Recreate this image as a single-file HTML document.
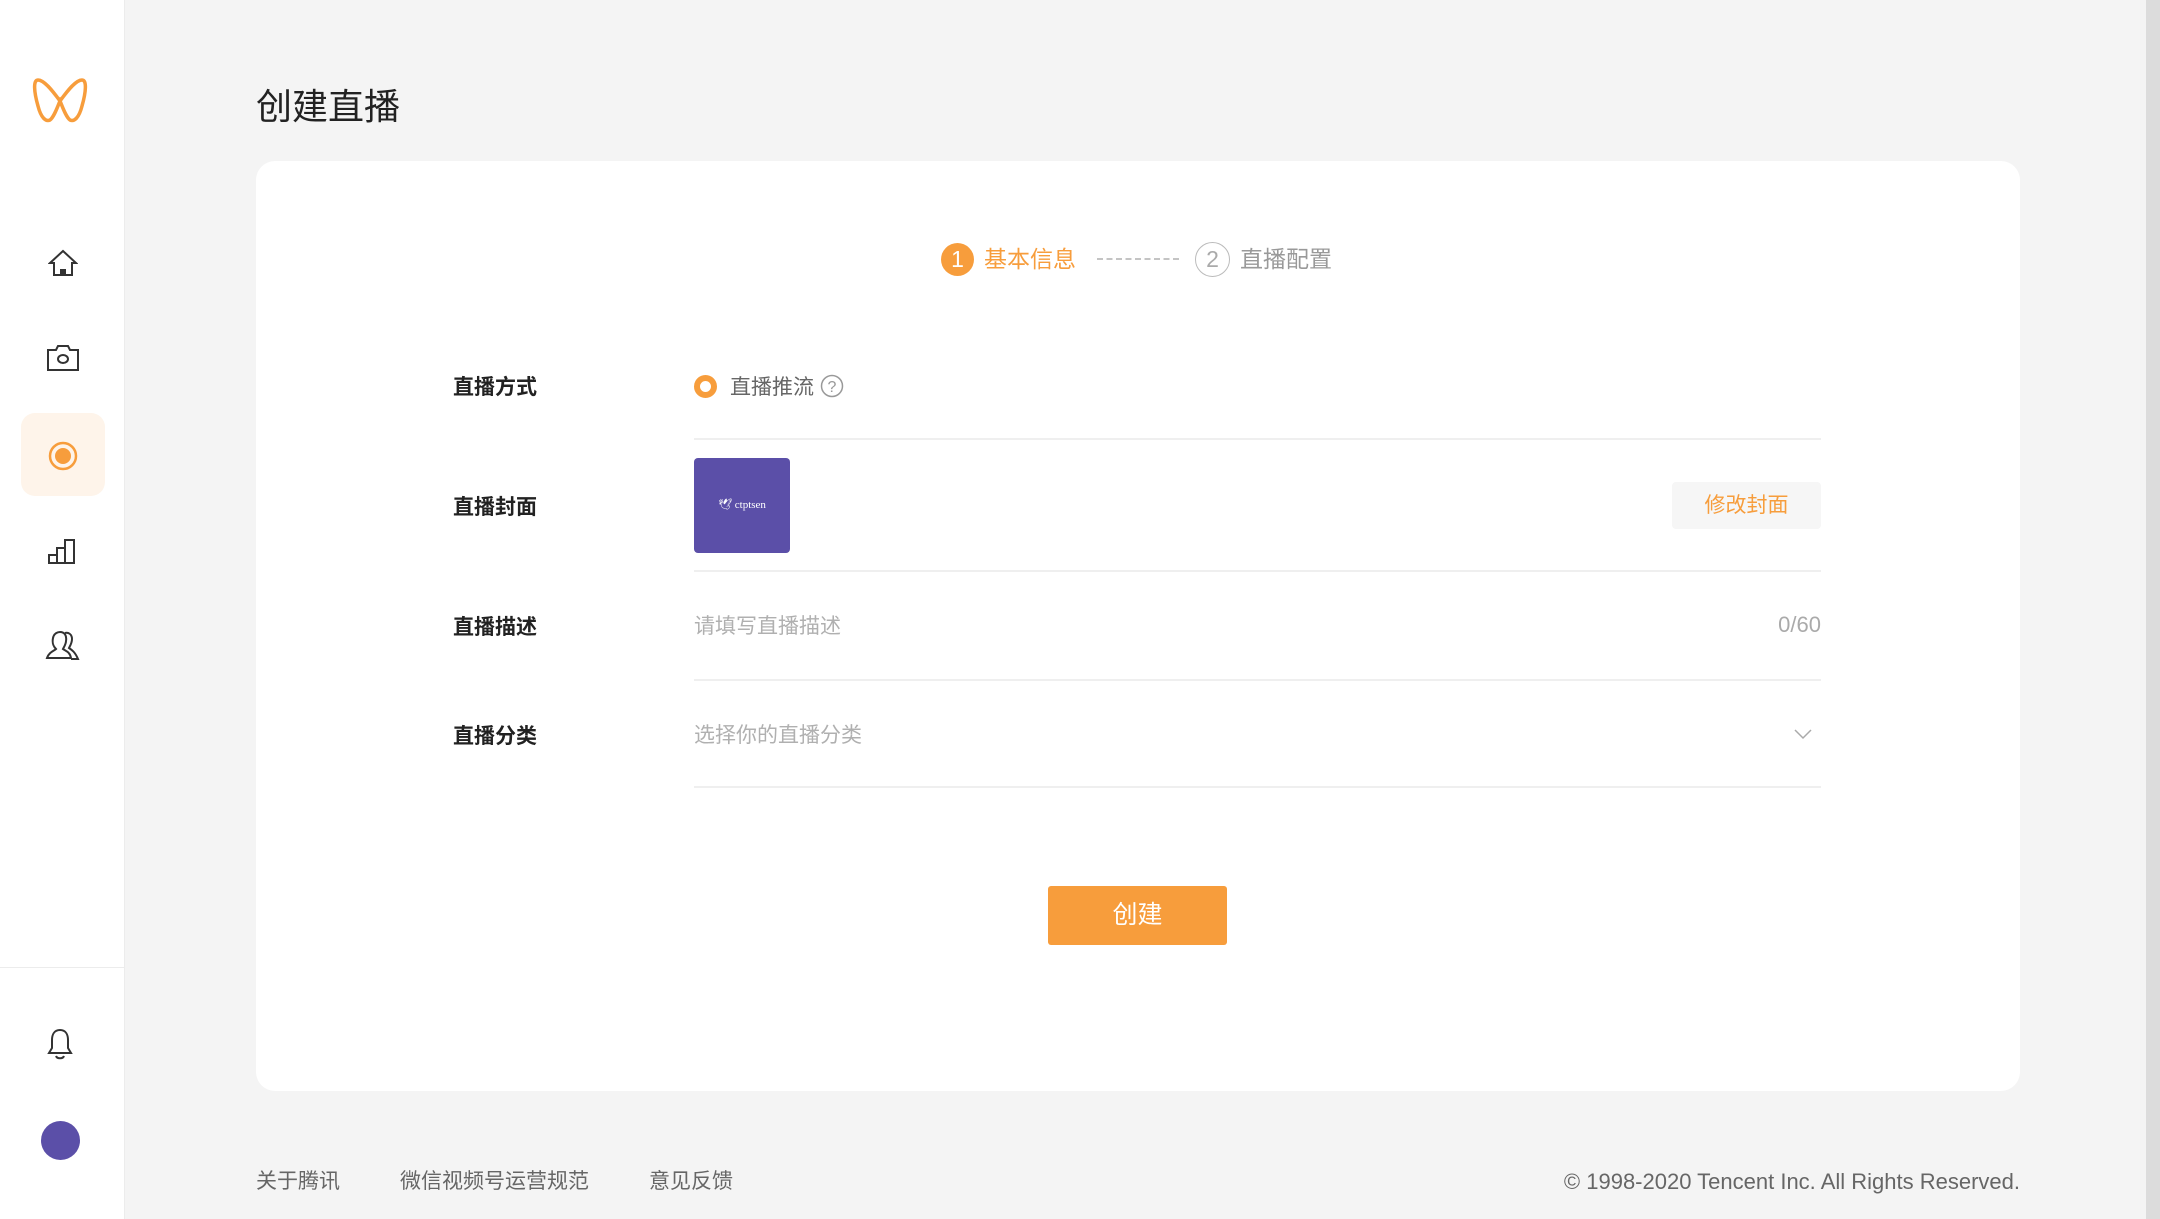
<!DOCTYPE html>
<html><head><meta charset="utf-8"><style>
*{margin:0;padding:0;box-sizing:border-box}
body{width:2160px;height:1219px;background:#f4f4f4;font-family:"Liberation Sans","Noto Sans CJK SC",sans-serif;position:relative;overflow:hidden;color:#333}
.a{position:absolute}
.side{left:0;top:0;width:125px;height:1219px;background:#fff;border-right:1px solid #ececec}
.lbl{left:453px;font-size:21px;font-weight:bold;color:#222;transform:translateY(-50%)}
.line{left:694px;width:1127px;height:2px;background:#efefef}
.ph{font-size:21px;color:#b0b0b0;transform:translateY(-50%)}
.ft{top:1167px;font-size:21px;color:#666;line-height:30px}
</style></head><body>
<div class="a side"></div>
<div class="a" style="left:0;top:967px;width:125px;height:1px;background:#ececec"></div>
<div class="a" style="left:2146px;top:0;width:14px;height:1219px;background:#dcdcdc"></div>
<svg class="a" style="left:32px;top:76px" width="56" height="50" viewBox="0 0 56 50"><path d="M28 25 C20 14 12 4 6 4 C1 4 2 16 6 30 C9 42 14 46 18 44 C22 41 25 32 28 25 C31 32 34 41 38 44 C42 46 47 42 50 30 C54 16 55 4 50 4 C44 4 36 14 28 25Z" fill="none" stroke="#f79d3c" stroke-width="3.5"/></svg>
<svg class="a" style="left:48px;top:249px" width="30" height="28" viewBox="0 0 30 28" fill="none" stroke="#333" stroke-width="2"><path d="M2 14 L15 2 L28 14 H24 V26 H6 V14Z"/><path d="M13 26 V21 H17 V26" fill="#333"/></svg>
<svg class="a" style="left:47px;top:345px" width="32" height="26" viewBox="0 0 32 26" fill="none" stroke="#333" stroke-width="2"><path d="M1 5 H9 L11 1 H21 L23 5 H31 V25 H1Z"/><ellipse cx="16" cy="14" rx="5" ry="4"/></svg>
<div class="a" style="left:21px;top:413px;width:84px;height:83px;background:#fef4ea;border-radius:14px"></div>
<svg class="a" style="left:47px;top:440px" width="32" height="32" viewBox="0 0 32 32"><circle cx="16" cy="16" r="13" fill="none" stroke="#f79d3c" stroke-width="2.5"/><circle cx="16" cy="16" r="8" fill="#f79d3c"/></svg>
<svg class="a" style="left:47px;top:537px" width="32" height="28" viewBox="0 0 32 28" fill="none" stroke="#333" stroke-width="2"><path d="M2 26 V18 H10 V26Z M10 26 V11 H18 V26 M18 26 V3 H27 V26Z M2 26 H27"/></svg>
<svg class="a" style="left:45px;top:630px" width="36" height="32" viewBox="0 0 36 32" fill="none" stroke="#333" stroke-width="2"><path d="M2 28 C4 22 9 21 11 19 C8 16 7 13 8 8 C9 3 13 2 15 2 C19 2 22 5 21 11 C21 14 19 17 18 19 C21 21 25 22 26 28Z"/><path d="M20 3 C23 2 27 4 27 9 C27 13 25 16 24 18 C27 20 30 22 33 29 H26"/></svg>
<svg class="a" style="left:46px;top:1028px" width="28" height="32" viewBox="0 0 28 32" fill="none" stroke="#333" stroke-width="2"><path d="M14 2 C8 2 6 7 6 12 V20 L3 25 H25 L22 20 V12 C22 7 20 2 14 2Z"/><path d="M10 28 C11 31 17 31 18 28"/></svg>
<div class="a" style="left:41px;top:1121px;width:39px;height:39px;border-radius:50%;background:#5b4fa8"></div>
<div class="a" style="left:256px;top:78px;font-size:36px;color:#222">创建直播</div>
<div class="a" style="left:256px;top:161px;width:1764px;height:930px;background:#fff;border-radius:19px"></div>
<div class="a" style="left:941px;top:243px;width:33px;height:33px;border-radius:50%;background:#f79d3c;color:#fff;font-size:23px;text-align:center;line-height:33px">1</div>
<div class="a" style="left:984px;top:243px;font-size:23px;color:#f79d3c;line-height:33px">基本信息</div>
<div class="a" style="left:1097px;top:258px;width:82px;border-top:2px dashed #c4c4c4"></div>
<div class="a" style="left:1195px;top:242px;width:35px;height:35px;border-radius:50%;border:1.5px solid #bbb;color:#aaa;font-size:23px;text-align:center;line-height:32px">2</div>
<div class="a" style="left:1240px;top:243px;font-size:23px;color:#999;line-height:33px">直播配置</div>
<div class="a lbl" style="top:386px">直播方式</div>
<div class="a" style="left:694px;top:375px;width:23px;height:23px;border-radius:50%;border:6px solid #f79d3c"></div>
<div class="a ph" style="left:730px;top:386px;color:#666">直播推流</div>
<svg class="a" style="left:820px;top:374px" width="24" height="24" viewBox="0 0 24 24"><circle cx="12" cy="12" r="10.5" fill="none" stroke="#999" stroke-width="1.5"/><text x="12" y="18" font-size="16" text-anchor="middle" fill="#999" font-family="Liberation Sans">?</text></svg>
<div class="a line" style="top:438px"></div>
<div class="a lbl" style="top:506px">直播封面</div>
<div class="a" style="left:694px;top:458px;width:96px;height:95px;background:#5b4fa8;border-radius:4px;color:#fff;font-size:11px;font-family:'Liberation Serif',serif;text-align:center;line-height:95px">&#x1F54A; ctptsen</div>
<div class="a" style="left:1672px;top:482px;width:149px;height:47px;background:#f6f6f6;border-radius:4px;color:#f79d3c;font-size:21px;text-align:center;line-height:47px">修改封面</div>
<div class="a line" style="top:570px"></div>
<div class="a lbl" style="top:626px">直播描述</div>
<div class="a ph" style="left:694px;top:625px">请填写直播描述</div>
<div class="a ph" style="right:339px;top:625px;color:#aaa;font-size:22px">0/60</div>
<div class="a line" style="top:679px"></div>
<div class="a lbl" style="top:735px">直播分类</div>
<div class="a ph" style="left:694px;top:734px">选择你的直播分类</div>
<svg class="a" style="left:1794px;top:728px" width="18" height="12" viewBox="0 0 18 12"><path d="M1 2 L9 10 L17 2" fill="none" stroke="#aaa" stroke-width="1.5"/></svg>
<div class="a line" style="top:786px"></div>
<div class="a" style="left:1048px;top:886px;width:179px;height:59px;background:#f79d3c;border-radius:3px;color:#fff;font-size:25px;text-align:center;line-height:59px">创建</div>
<div class="a ft" style="left:256px">关于腾讯</div>
<div class="a ft" style="left:400px">微信视频号运营规范</div>
<div class="a ft" style="left:649px">意见反馈</div>
<div class="a ft" style="right:140px;font-size:22px">© 1998-2020 Tencent Inc. All Rights Reserved.</div>
</body></html>
